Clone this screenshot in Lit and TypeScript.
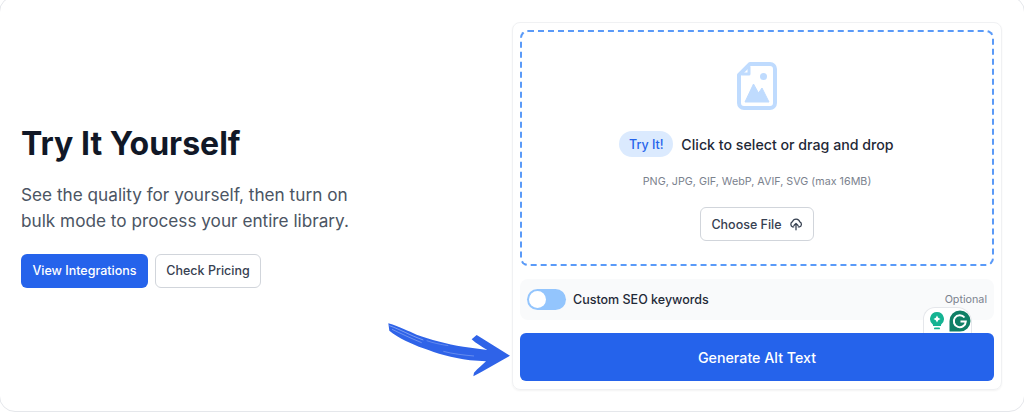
import { LitElement, css, html, svg } from 'lit';
import { customElement } from 'lit/decorators.js';

@customElement('app-root')
export class AppRoot extends LitElement {
  static styles = css`
    :host {
      display: block;
      width: 1024px;
      height: 413px;
      overflow: hidden;
      background: #fff;
      font-family: Inter, 'Liberation Sans', sans-serif;
    }

    .frame {
      box-sizing: border-box;
      position: relative;
      height: 416px;
      margin-top: -4px;
      margin-left: -1px;
      width: 1026px;
      border: 1px solid #e5e7eb;
      border-radius: 16px;
      display: flex;
      padding: 25px 30px 20px 21px;
    }

    .intro {
      width: 491px;
      flex: none;
      display: flex;
      flex-direction: column;
      justify-content: center;
      padding-bottom: 2px;
    }

    h2 {
      margin: 0;
      font-size: 32px;
      line-height: 40px;
      font-weight: 700;
      color: #111827;
    }

    .lead {
      margin: 18px 0 0;
      font-size: 17.2px;
      line-height: 26px;
      color: #4b5563;
      width: 345px;
    }

    .actions {
      display: flex;
      gap: 7px;
      margin-top: 20px;
    }

    .btn {
      box-sizing: border-box;
      height: 34px;
      display: flex;
      align-items: center;
      justify-content: center;
      border-radius: 6px;
      font-size: 12.5px;
      font-weight: 500;
    }

    .btn.primary {
      width: 127px;
      background: #2563eb;
      color: #fff;
    }

    .btn.outline {
      width: 106px;
      background: #fff;
      border: 1px solid #d1d5db;
      color: #374151;
    }

    .arrow {
      position: absolute;
      left: 380px;
      top: 313px;
    }

    .card {
      box-sizing: border-box;
      width: 490px;
      height: 368px;
      flex: none;
      border: 1px solid #f0f1f3;
      border-radius: 8px;
      box-shadow: 0 1px 2px rgba(0, 0, 0, 0.05);
      padding: 7px;
      display: flex;
      flex-direction: column;
      position: relative;
    }

    .drop {
      box-sizing: border-box;
      height: 236px;
      border: 2px dashed #5a9af8;
      border-radius: 8px;
      display: flex;
      flex-direction: column;
      align-items: center;
      padding-top: 30px;
    }

    .file {
      display: block;
    }

    .prompt {
      display: flex;
      align-items: center;
      gap: 8px;
      margin-top: 21px;
      margin-left: -1px;
      font-size: 14.2px;
      font-weight: 500;
      color: #1f2937;
      height: 26px;
    }

    .pill {
      background: #dbeafe;
      color: #2563eb;
      font-size: 12.5px;
      font-weight: 500;
      border-radius: 13px;
      width: 54px;
      justify-content: center;
      height: 26px;
      display: flex;
      align-items: center;
    }

    .formats {
      margin-top: 17px;
      font-size: 10.75px;
      line-height: 16px;
      color: #7b828e;
    }

    .choose {
      box-sizing: border-box;
      margin-top: 17px;
      width: 114px;
      height: 34px;
      border: 1px solid #d1d5db;
      border-radius: 6px;
      display: flex;
      align-items: center;
      justify-content: center;
      gap: 7px;
      font-size: 12.5px;
      font-weight: 500;
      color: #374151;
    }

    .seo {
      margin-top: 13px;
      height: 41px;
      background: #f9fafb;
      border-radius: 8px;
      display: flex;
      align-items: center;
      padding: 0 7px;
      gap: 7px;
      font-size: 12.5px;
      font-weight: 500;
      color: #1f2937;
    }

    .toggle {
      box-sizing: border-box;
      width: 39px;
      height: 21px;
      border-radius: 11px;
      background: #93c5fd;
      padding: 2px;
    }

    .toggle span {
      display: block;
      width: 17px;
      height: 17px;
      border-radius: 50%;
      background: #fff;
    }

    .optional {
      margin-left: auto;
      font-size: 10.75px;
      font-weight: 400;
      color: #7b828e;
    }

    .generate {
      margin-top: 13px;
      height: 48px;
      border-radius: 6px;
      background: #2563eb;
      color: #fff;
      font-size: 14.25px;
      font-weight: 500;
      display: flex;
      align-items: center;
      justify-content: center;
    }

    .grammarly {
      position: absolute;
      left: 410px;
      top: 284px;
      width: 49px;
      height: 26px;
      background: #fff;
      border: 1px solid #e5e7eb;
      border-bottom: none;
      border-radius: 12px 15px 0 0;
      display: flex;
      align-items: center;
      gap: 4px;
      padding-left: 5px;
      box-sizing: border-box;
    }
  `;

  // traced in the coordinates of a 3x crop, hence the 480x270 viewBox
  private renderArrow() {
    return html`<svg class="arrow" width="160" height="90" viewBox="0 0 480 270">
      ${svg`<path d="M25 40 C 60 50 85 64 110 74 C 150 88 200 102 250 110 L 322 120 C 305 110 288 100 275 88 L 290 75 L 390 137 L 304 186 L 280 199 L 282 188 C 295 174 308 164 318 154 L 270 151 C 215 144 170 130 130 115 C 95 102 55 84 28 62 Z" fill="#2f63e8"/>
      <path d="M28 47 C 60 58 90 76 130 90" stroke="#fff" stroke-width="1.6" fill="none" opacity="0.7"/>
      <path d="M36 58 C 62 70 90 84 125 98" stroke="#fff" stroke-width="1.4" fill="none" opacity="0.65"/>
      <path d="M140 92 C 160 99 180 103 205 107" stroke="#fff" stroke-width="1.3" fill="none" opacity="0.55"/>
      <path d="M190 124 C 220 132 250 135 282 138" stroke="#fff" stroke-width="1.3" fill="none" opacity="0.6"/>`}
    </svg>`;
  }

  private renderFile() {
    return html`<svg class="file" width="40" height="48" viewBox="0 0 40 48" fill="none">
      ${svg`<path d="M13 2 H33 A5 5 0 0 1 38 7 V41 A5 5 0 0 1 33 46 H7 A5 5 0 0 1 2 41 V13 Z" stroke="#bfdbfe" stroke-width="4" stroke-linejoin="round"/>
      <path d="M12 5 V12 H5" stroke="#bfdbfe" stroke-width="3" stroke-linejoin="round"/>
      <circle cx="26.5" cy="14.5" r="3.5" fill="#bfdbfe"/>
      <path d="M8 40 L16.5 22 L21.5 31 L25 26 L32 40 Z" fill="#bfdbfe" stroke="#bfdbfe" stroke-linejoin="round"/>`}
    </svg>`;
  }

  render() {
    return html`
      <div class="frame">
        <section class="intro">
          <h2>Try It Yourself</h2>
          <p class="lead">See the quality for yourself, then turn on bulk mode to process your entire library.</p>
          <div class="actions">
            <div class="btn primary">View Integrations</div>
            <div class="btn outline">Check Pricing</div>
          </div>
        </section>
        ${this.renderArrow()}
        <section class="card">
          <div class="drop">
            ${this.renderFile()}
            <div class="prompt"><span class="pill">Try It!</span>Click to select or drag and drop</div>
            <div class="formats">PNG, JPG, GIF, WebP, AVIF, SVG (max 16MB)</div>
            <div class="choose">
              Choose File
              <svg width="14" height="14" viewBox="0 0 24 24" fill="none" stroke="#374151" stroke-width="2.2" stroke-linecap="round" stroke-linejoin="round">
                <path d="M8 17 H6 A5 5 0 0 1 6 8 A6.5 6.5 0 0 1 18.5 8.5 A4.5 4.5 0 0 1 18 17 H16" />
                <path d="M12 22 V11 M8.5 14.5 L12 11 L15.5 14.5" />
              </svg>
            </div>
          </div>
          <div class="seo">
            <div class="toggle"><span></span></div>
            Custom SEO keywords
            <span class="optional">Optional</span>
          </div>
          <div class="generate">Generate Alt Text</div>
          <div class="grammarly">
            <svg width="16" height="20" viewBox="0 0 16 20">
              <path d="M8 1 A7 7 0 0 1 12 13.7 V15 H4 V13.7 A7 7 0 0 1 8 1 Z" fill="#15b392" />
              <path d="M8 4.5 L9.2 6.8 L11.5 8 L9.2 9.2 L8 11.5 L6.8 9.2 L4.5 8 L6.8 6.8 Z" fill="#fff" />
              <rect x="5" y="16.5" width="6" height="1.8" rx="0.9" fill="#15b392" />
            </svg>
            <svg width="22" height="22" viewBox="0 0 22 22">
              <path d="M11 0.5 A10.5 10.5 0 0 1 11 21.5 H0.5 V11 A10.5 10.5 0 0 1 11 0.5 Z" fill="#0f7f66" />
              <path d="M15.5 7.5 A6 6 0 1 0 16.8 11.5 H11.5" fill="none" stroke="#fff" stroke-width="2" />
            </svg>
          </div>
        </section>
      </div>
    `;
  }
}
